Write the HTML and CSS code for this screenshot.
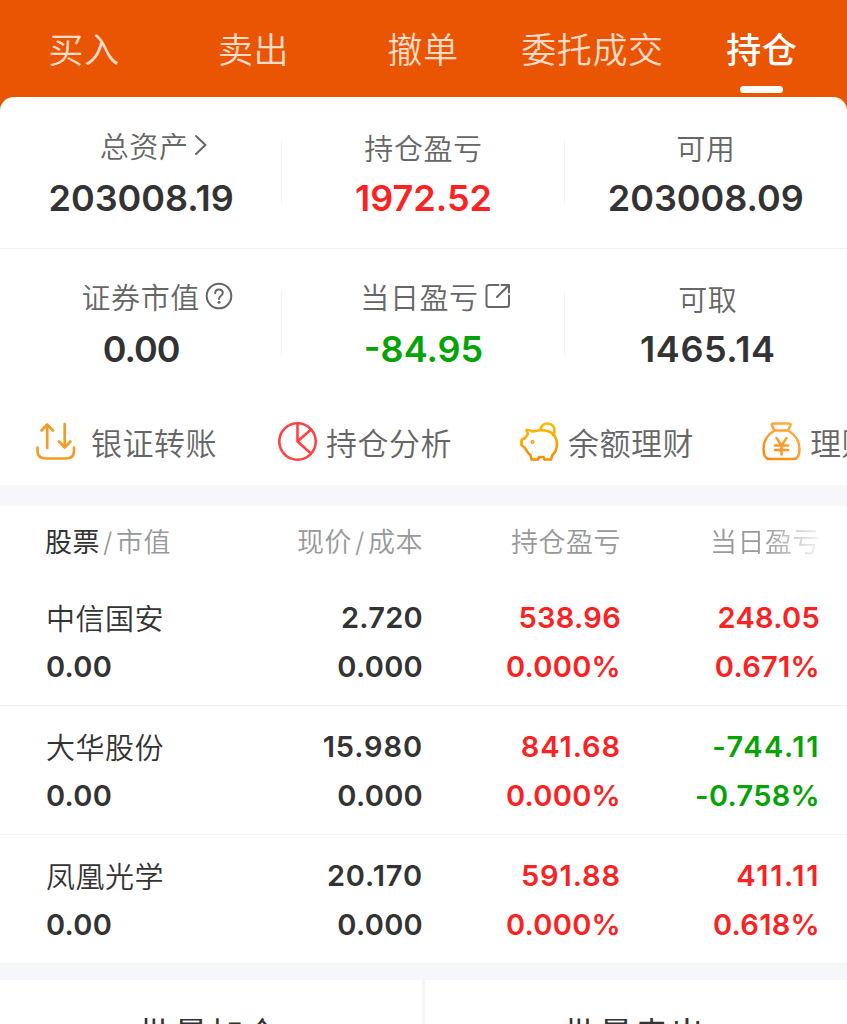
FILE: index.html
```html
<!DOCTYPE html>
<html lang="zh-CN">
  <head>
    <meta charset="UTF-8" />
    <meta name="viewport" content="width=device-width, initial-scale=1.0" />
    <title>持仓</title>
    <link rel="stylesheet" href="styles.css">
  </head>
  <body>
    <nav class="tabs">
      <div class="tab">买入</div>
      <div class="tab">卖出</div>
      <div class="tab">撤单</div>
      <div class="tab">委托成交</div>
      <div class="tab active">持仓</div>
    </nav>

    <main>
      <section class="card">
        <div class="summary">
          <div class="item">
            <div class="label raised total">总资产<svg class="chevron" width="14" height="22" viewBox="0 0 14 22"><path d="M2 2l9.500 9L2 20" /></svg></div>
            <div class="value">203008.19</div>
          </div>
          <div class="item">
            <div class="label">持仓盈亏</div>
            <div class="value red">1972.52</div>
          </div>
          <div class="item">
            <div class="label">可用</div>
            <div class="value">203008.09</div>
          </div>
        </div>
        <div class="summary second">
          <div class="item">
            <div class="label raised market">证券市值<svg class="help" width="28" height="28" viewBox="0 0 28 28"><circle cx="14" cy="14" r="12.300" /><path d="M10.200 11.200c0-2.300 1.600-3.800 3.800-3.800s3.800 1.500 3.800 3.500c0 2.700-3.800 3.100-3.800 6" /><circle class="dot" cx="14" cy="20.300" r="1.500" /></svg></div>
            <div class="value narrow">0.00</div>
          </div>
          <div class="item">
            <div class="label raised today">当日盈亏<svg class="share" width="28" height="28" viewBox="0 0 28 28"><path d="M14.500 3H5Q2.500 3 2.500 5.500V22.500Q2.500 25 5 25H22.500Q25 25 25 22.500V13.500M17.500 3H25V10.500M25 3L13 15" /></svg></div>
            <div class="value green">-84.95</div>
          </div>
          <div class="item nudge">
            <div class="label">可取</div>
            <div class="value wide">1465.14</div>
          </div>
        </div>
        <div class="actions">
          <div class="action transfer">
            <svg width="40" height="40" viewBox="0 0 40 40" stroke="#f39c2d" stroke-width="2.700">
              <path d="M1.500 25.500v3.500Q1.500 36.500 10 36.500H30Q38 36.500 38 29v-3.500" />
              <path d="M11.200 26V2.500M5.500 8.500l5.700-6 5.700 6M28.700 2v23.500M23 19.500l5.700 6 5.700-6" />
            </svg>
            <span>银证转账</span>
          </div>
          <div class="action">
            <svg width="40" height="40" viewBox="0 0 40 40" stroke="#ff4245" stroke-width="2.600">
              <circle cx="19.500" cy="19.500" r="18.200" />
              <path d="M19.500 1.500v18L33 31.500M19.500 19.500L33 7.500" />
            </svg>
            <span>持仓分析</span>
          </div>
          <div class="action">
            <svg width="40" height="40" viewBox="0 0 40 40" stroke="url(#pigFill)" stroke-width="2.600">
              <defs>
                <linearGradient id="pigFill" x1="0" y1="0" x2="0" y2="40" gradientUnits="userSpaceOnUse"><stop stop-color="#ffbd00" /><stop offset="1" stop-color="#f58b00" /></linearGradient>
              </defs>
              <path d="M6.500 8Q10 8 13 9.500C18 8.200 24 7.800 28.500 9.300C34 11.500 37 16 37 22C37 26.500 35.200 30.500 32.200 33.500L31 37.500H24.500L23.500 35H19L18 37.500H11.500L10.500 33C8 31.500 6.500 28.500 5 26L1.500 23V18L5 16L8 12Z" />
              <path d="M20.500 8C21.200 4 24 1.500 27.500 1.500C32 1.500 35.200 5 34.500 9.500Q34.200 11.500 33 13" />
              <circle cx="12.500" cy="20" r="0.800" />
            </svg>
            <span>余额理财</span>
          </div>
          <div class="action">
            <svg width="40" height="40" viewBox="0 0 40 40" stroke="url(#bagFill)" stroke-width="2.500">
              <defs>
                <linearGradient id="bagFill" x1="32" y1="0" x2="6" y2="40" gradientUnits="userSpaceOnUse"><stop stop-color="#ffb247" /><stop offset="1" stop-color="#ff850f" /></linearGradient>
              </defs>
              <path d="M12.500 8.500L10 3.500Q9.500 1.500 11.500 1.500H26.500Q29.500 1.500 28.500 3.500L26 8.500M12.500 8.500H26C33 12.500 37.500 19 37.500 27Q37.500 37 31.500 37H7.500Q1.500 37 1.500 27C1.500 19 5.500 12.500 12.500 8.500Z" />
              <path d="M14.500 16l5 7.500 5-7.500M13 23.500h13M13 28h13M19.500 23.500v9" />
            </svg>
            <span>理财</span>
          </div>
        </div>
      </section>

      <section class="holdings">
        <div class="row head">
          <div><b>股票</b><i>/</i>市值</div>
          <div>现价<i>/</i>成本</div>
          <div>持仓盈亏</div>
          <div class="fade">当日盈亏</div>
        </div>
        <div class="row">
          <div class="stock">中信国安</div>
          <div>2.720</div>
          <div class="red">538.96</div>
          <div class="red">248.05</div>
          <div>0.00</div>
          <div>0.000</div>
          <div class="red">0.000%</div>
          <div class="red">0.671%</div>
        </div>
        <div class="row">
          <div class="stock">大华股份</div>
          <div class="wide">15.980</div>
          <div class="red wide">841.68</div>
          <div class="green wider">-744.11</div>
          <div>0.00</div>
          <div>0.000</div>
          <div class="red">0.000%</div>
          <div class="green">-0.758%</div>
        </div>
        <div class="row">
          <div class="stock">凤凰光学</div>
          <div class="wide">20.170</div>
          <div class="red wide">591.88</div>
          <div class="red wider">411.11</div>
          <div>0.00</div>
          <div>0.000</div>
          <div class="red">0.000%</div>
          <div class="red">0.618%</div>
        </div>
      </section>

      <footer class="batch">
        <div>批量加仓</div>
        <div>批量卖出</div>
      </footer>
    </main>
  </body>
</html>
```

FILE: styles.css
```css
* {
  box-sizing: border-box;
}

body {
  margin: 0;
  height: 1024px;
  overflow: hidden;
  background-color: #ea5504;
  color: #333;
  font-family: Inter, "Noto Sans CJK SC", sans-serif;
}

svg {
  fill: none;
  stroke-linecap: round;
  stroke-linejoin: round;
  flex-shrink: 0;
}

.red {
  color: #fa2222;
}

.green {
  color: #05a305;
}

/* top tabs */
.tabs {
  display: grid;
  grid-template-columns: repeat(5, 1fr);
  height: 97px;
}

.tab {
  position: relative;
  line-height: 100px;
  text-align: center;
  font-size: 35px;
  font-weight: 350;
  letter-spacing: 0.6px;
  color: #ffdcc8;
  margin-left: -1px;
}

.tab.active {
  color: #fff;
  font-weight: 500;
}

.tab.active::after {
  content: "";
  position: absolute;
  left: 63px;
  top: 86px;
  width: 43px;
  height: 7px;
  border-radius: 4px;
  background: #fff;
}

/* account summary */
.card {
  height: 388px;
  background: #fff;
  border-radius: 14px 14px 0 0;
}

.summary {
  display: grid;
  grid-template-columns: repeat(3, 1fr);
  height: 152px;
  padding-top: 28px;
  border-bottom: 1px solid #f0f0f1;
}

.summary.second {
  height: 150px;
  padding-top: 27px;
  border-bottom: none;
}

.item {
  background: linear-gradient(#f3f3f4, #f3f3f4) right 15px / 1px 64px no-repeat;
}

.item:last-child {
  background: none;
}

.item.nudge {
  padding-left: 4px;
}

.label {
  display: flex;
  justify-content: center;
  align-items: center;
  height: 44px;
  font-size: 29px;
  font-weight: 350;
  letter-spacing: 0.6px;
  color: #666;
}

.label.raised {
  padding-bottom: 4px;
}

.label.total {
  padding-left: 25px;
}

.label.market {
  padding-left: 32px;
}

.label.today {
  padding-left: 25px;
}

.label svg {
  stroke: #666;
  stroke-width: 2;
}

.chevron {
  margin-left: 5px;
}

.help,
.share {
  margin-left: 5px;
}

.help .dot {
  fill: #666;
  stroke: none;
}

.value {
  text-align: center;
  font-size: 36px;
  line-height: 59px;
  font-weight: 600;
}

.value.narrow {
  letter-spacing: -1px;
}

.value.wide {
  letter-spacing: 0.6px;
}

/* shortcuts */
.actions {
  display: flex;
  overflow: hidden;
  height: 86px;
  padding: 0 0 1px 36px;
}

.action {
  display: flex;
  flex: 0 0 242px;
  align-items: center;
  gap: 8px;
  font-size: 31px;
  font-weight: 350;
  letter-spacing: 0.5px;
  white-space: nowrap;
  color: #666;
}

.action.transfer {
  gap: 15px;
}

/* holdings table */
.holdings {
  border-top: 21px solid #f6f7fa;
  background: #fff;
}

.row {
  display: grid;
  grid-template-columns: 177px 200px 198px 199px;
  grid-template-rows: 49px 48px;
  height: 129px;
  padding: 17px 27px 0 46px;
  border-bottom: 1px solid #f2f3f6;
  line-height: 48px;
  text-align: right;
  font-size: 29px;
  font-weight: 600;
  letter-spacing: 0.3px;
}

.row > :nth-child(4n + 1) {
  text-align: left;
}

.row .stock {
  padding-top: 2px;
  font-weight: 350;
  letter-spacing: 0.5px;
}

.row .wide {
  letter-spacing: 0.9px;
}

.row .wider {
  letter-spacing: 1.6px;
}

.row.head {
  height: 71px;
  padding: 13px 27px 0 45px;
  grid-template-columns: 178px 200px 198px 199px;
  border: none;
  font-size: 27px;
  font-weight: 350;
  letter-spacing: 0.5px;
  color: #999;
}

.head b {
  font-weight: 400;
  color: #333;
}

.head i {
  margin: 0 3px;
  font-style: normal;
}

.head .fade {
  -webkit-mask-image: linear-gradient(to right, #000 72%, transparent 103%);
  mask-image: linear-gradient(to right, #000 72%, transparent 103%);
}

/* batch buttons */
.batch {
  display: grid;
  grid-template-columns: 1fr 1fr;
  gap: 3px;
  border-top: 16px solid #f6f7fa;
  background: #f6f7fa;
}

.batch div {
  height: 108px;
  padding-right: 3px;
  background: #fff;
  line-height: 110px;
  text-align: center;
  font-size: 34px;
  letter-spacing: 1.5px;
}
```
